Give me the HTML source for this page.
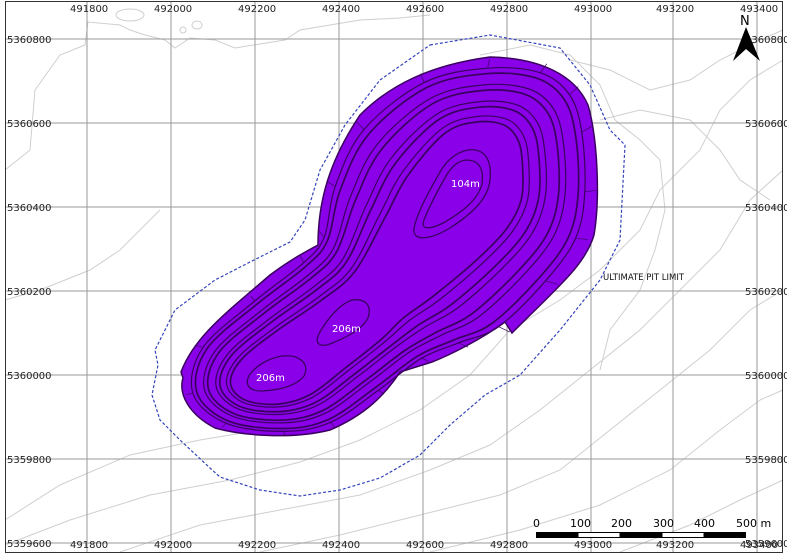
<!DOCTYPE html>
<html><head><meta charset="utf-8"><style>
html,body{margin:0;padding:0;background:#fff}
svg{display:block}
text{font-family:"DejaVu Sans","Liberation Sans",sans-serif}
</style></head><body>
<svg id="m" width="787" height="557" viewBox="0 0 787 557" xmlns="http://www.w3.org/2000/svg">
<rect width="787" height="557" fill="#fff"/>
<g fill="none" stroke="#cfcfcf" stroke-width="1">
<path d="M5,170 L30,150 L35,90 L60,55 L85,45 L88,22 L120,25 L130,30 L145,35 L165,40 L175,48 L190,38 L215,40 L235,48 L260,44 L285,40 L300,30 L330,25 L360,20 L400,18 L430,15"/>
<path d="M5,520 L60,485 L130,455 L200,440 L260,430"/>
<path d="M5,545 L70,520 L150,495 L230,480 L300,462 L360,440 L420,410 L470,375 L510,330 L560,300 L600,270 L640,230 L660,190 L700,150 L720,110 L750,80 L783,60"/>
<path d="M120,552 L200,525 L280,510 L360,495 L430,470 L490,445 L540,410 L590,370 L640,330 L680,290 L720,250 L750,200 L783,170"/>
<path d="M260,552 L340,535 L420,515 L500,495 L560,470 L610,430 L660,390 L710,350 L750,310 L783,290"/>
<path d="M430,552 L520,530 L600,505 L670,470 L720,430 L760,400 L783,390"/>
<path d="M620,552 L690,525 L740,500 L783,480"/>
<path d="M480,55 L530,45 L570,55 L600,85 L615,120 L640,140 L660,160 L665,210 L655,250 L640,290 L610,330 L600,370"/>
<path d="M570,60 L610,70 L650,90 L690,80 L720,60 L760,40 L783,30"/>
<path d="M600,120 L640,110 L690,120 L720,150 L740,180 L770,200"/>
<path d="M5,300 L40,290 L90,270 L120,250 L140,230 L160,210"/>
<ellipse cx="130" cy="15" rx="14" ry="6"/>
<ellipse cx="197" cy="25" rx="5" ry="4"/>
<ellipse cx="183" cy="30" rx="3" ry="3"/>
</g>
<g stroke="#9a9a9a" stroke-width="1">
<line x1="87" y1="1" x2="87" y2="552"/><line x1="171" y1="1" x2="171" y2="552"/>
<line x1="255" y1="1" x2="255" y2="552"/><line x1="339" y1="1" x2="339" y2="552"/>
<line x1="423" y1="1" x2="423" y2="552"/><line x1="507" y1="1" x2="507" y2="552"/>
<line x1="591" y1="1" x2="591" y2="552"/><line x1="673" y1="1" x2="673" y2="552"/>
<line x1="757" y1="1" x2="757" y2="552"/>
<line x1="5" y1="39" x2="783" y2="39"/><line x1="5" y1="123" x2="783" y2="123"/>
<line x1="5" y1="207" x2="783" y2="207"/><line x1="5" y1="291" x2="783" y2="291"/>
<line x1="5" y1="375" x2="783" y2="375"/><line x1="5" y1="459" x2="783" y2="459"/>
<line x1="5" y1="543" x2="783" y2="543"/>
</g>
<path d="M430,45 L490,35 L560,48 L590,85 L610,130 L625,145 L620,240 L600,280 L560,330 L520,375 L485,395 L450,425 L420,455 L380,478 L340,490 L300,496 L260,490 L220,477 L210,468 L180,440 L160,420 L152,395 L158,365 L155,350 L175,310 L215,280 L250,262 L290,242 L305,220 L320,170 L345,125 L380,80 Z" fill="none" stroke="#3344bb" stroke-width="1.2" stroke-dasharray="3,2"/>
<path d="M490,57 C540,58 575,75 588,105 C598,140 600,200 594,235 C585,265 560,285 512,333 L505,322 C480,340 450,355 432,362 L400,372 C385,395 365,415 330,430 C290,440 240,435 215,428 C190,415 178,395 183,378 L181,372 C195,335 230,310 270,275 C290,260 305,252 318,245 C318,200 330,160 360,115 C390,85 430,65 490,57 Z" fill="#8a00e8" stroke="#3a0060" stroke-width="1.5"/>
<g id="cont" fill="none" stroke="#3a0060"></g>
<g fill="none" stroke="#3a0060" stroke-width="1.3">
<path d="M468,150 C485,148 492,160 490,180 C488,200 470,215 450,228 C430,240 412,242 414,228 C418,210 430,190 440,172 C448,158 458,152 468,150 Z"/>
<path d="M466,160 C480,160 484,170 482,184 C478,200 462,212 445,222 C430,230 420,230 424,220 C430,205 438,190 446,176 C452,166 458,161 466,160 Z"/>
<path d="M352,300 C366,298 372,306 368,318 C362,330 345,338 330,344 C318,348 314,342 320,332 C328,318 340,304 352,300 Z"/>
<path d="M282,356 C300,354 310,364 304,376 C296,386 280,390 262,391 C248,391 244,384 250,374 C258,364 270,358 282,356 Z"/>
</g>
<g fill="#fff" font-size="10">
<text x="451" y="187">104m</text>
<text x="332" y="332">206m</text>
<text x="256" y="381">206m</text>
</g>
<text x="603" y="280" font-size="8.5" fill="#111">ULTIMATE PIT LIMIT</text>
<g font-size="10" fill="#222">
<text x="70" y="12">491800</text><text x="154" y="12">492000</text>
<text x="238" y="12">492200</text><text x="322" y="12">492400</text>
<text x="406" y="12">492600</text><text x="490" y="12">492800</text>
<text x="574" y="12">493000</text><text x="656" y="12">493200</text>
<text x="740" y="12">493400</text>
<text x="70" y="548">491800</text><text x="154" y="548">492000</text>
<text x="238" y="548">492200</text><text x="322" y="548">492400</text>
<text x="406" y="548">492600</text><text x="490" y="548">492800</text>
<text x="574" y="548">493000</text><text x="656" y="548">493200</text>
<text x="740" y="548">493400</text>
<text x="7" y="43">5360800</text><text x="7" y="127">5360600</text>
<text x="7" y="211">5360400</text><text x="7" y="295">5360200</text>
<text x="7" y="379">5360000</text><text x="7" y="463">5359800</text>
<text x="7" y="547">5359600</text>
<text x="745" y="43">5360800</text><text x="745" y="127">5360600</text>
<text x="745" y="211">5360400</text><text x="745" y="295">5360200</text>
<text x="745" y="379">5360000</text><text x="745" y="463">5359800</text>
<text x="745" y="547">5359600</text>
</g>
<text x="740" y="25" font-size="13" fill="#000">N</text>
<path d="M746,27 L733,61 L746,49 L760,61 Z" fill="#000"/>
<g font-size="11" fill="#000">
<text x="533" y="527">0</text><text x="570" y="527">100</text><text x="611" y="527">200</text>
<text x="653" y="527">300</text><text x="694" y="527">400</text><text x="736" y="527">500 m</text>
</g>
<rect x="536" y="532" width="210" height="6" fill="#000"/>
<rect x="578.5" y="533" width="41" height="4" fill="#fff"/>
<rect x="662.5" y="533" width="41" height="4" fill="#fff"/>
<rect x="5.5" y="1.5" width="777" height="551" fill="none" stroke="#333" stroke-width="1"/>
</svg>
<script>
(function(){
var O=[[490,57],[548,62],[580,85],[594,125],[598,190],[590,240],[560,285],[512,333],[470,348],[430,362],[385,395],[335,428],[285,437],[222,428],[185,395],[195,345],[250,295],[300,255],[318,230],[325,180],[355,120],[420,72]];
var C=[[470,150],[485,152],[492,165],[492,185],[488,205],[470,225],[440,250],[400,280],[375,305],[360,330],[330,355],[300,380],[275,390],[255,388],[250,378],[262,365],[290,345],[330,320],[370,290],[410,235],[430,200],[455,160]];
function path(P){var n=P.length,d="M"+P[0][0].toFixed(1)+","+P[0][1].toFixed(1);
for(var i=0;i<n;i++){var p0=P[(i-1+n)%n],p1=P[i],p2=P[(i+1)%n],p3=P[(i+2)%n];
var c1=[p1[0]+(p2[0]-p0[0])/6,p1[1]+(p2[1]-p0[1])/6],c2=[p2[0]-(p3[0]-p1[0])/6,p2[1]-(p3[1]-p1[1])/6];
d+=" C"+c1[0].toFixed(1)+","+c1[1].toFixed(1)+" "+c2[0].toFixed(1)+","+c2[1].toFixed(1)+" "+p2[0].toFixed(1)+","+p2[1].toFixed(1);}
return d+"Z";}
var g=document.getElementById("cont"),ns="http://www.w3.org/2000/svg";
var ts=[0.12,0.18,0.3,0.36,0.48,0.54,0.64,0.7];
ts.forEach(function(t,k){var P=O.map(function(o,i){return [o[0]+(C[i][0]-o[0])*t,o[1]+(C[i][1]-o[1])*t];});
var e=document.createElementNS(ns,"path");e.setAttribute("d",path(P));e.setAttribute("stroke-width",k%2?"1.7":"1.2");g.appendChild(e);});
for(var i=0;i<O.length;i++){var e=document.createElementNS(ns,"line");
e.setAttribute("x1",O[i][0]+(C[i][0]-O[i][0])*0.02);e.setAttribute("y1",O[i][1]+(C[i][1]-O[i][1])*0.02);
e.setAttribute("x2",O[i][0]+(C[i][0]-O[i][0])*0.12);e.setAttribute("y2",O[i][1]+(C[i][1]-O[i][1])*0.12);
e.setAttribute("stroke-width","0.7");g.appendChild(e);}
})();
</script>
</body></html>
